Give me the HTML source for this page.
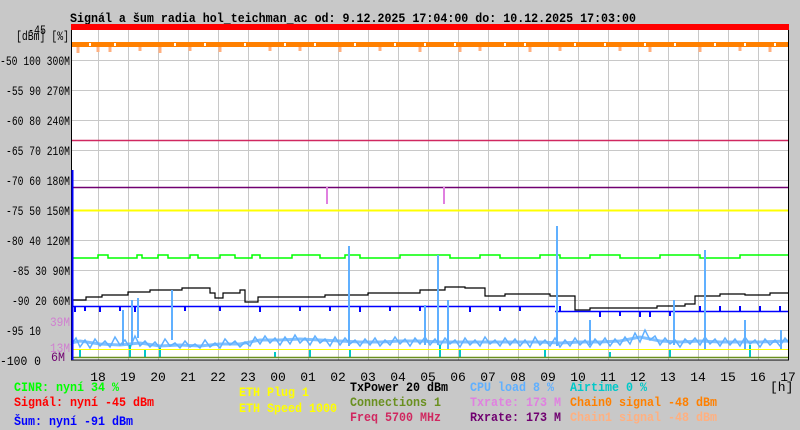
<!DOCTYPE html>
<html><head><meta charset="utf-8"><style>
html,body{margin:0;padding:0;background:#c8c8c8;width:800px;height:430px;overflow:hidden}
svg{display:block}
text{font-family:"Liberation Mono","DejaVu Sans Mono",monospace;font-size:13px}
.b{font-weight:bold}
</style></head><body>
<svg width="800" height="430" xmlns="http://www.w3.org/2000/svg">
<rect width="800" height="430" fill="#c8c8c8"/>
<text x="70" y="22" class="b" fill="#000" textLength="566" lengthAdjust="spacingAndGlyphs">Signál a šum radia hol_teichman_ac od: 9.12.2025 17:04:00 do: 10.12.2025 17:03:00</text>
<rect x="71" y="30" width="718" height="330" fill="#fff"/>
<g stroke="#c8c8c8" stroke-width="1">
<path d="M71 60.5H789M71 90.5H789M71 120.5H789M71 150.5H789M71 180.5H789M71 210.5H789M71 240.5H789M71 270.5H789M71 300.5H789M71 330.5H789"/>
<path d="M98.5 30V360M128.5 30V360M158.5 30V360M188.5 30V360M218.5 30V360M248.5 30V360M278.5 30V360M308.5 30V360M338.5 30V360M368.5 30V360M398.5 30V360M428.5 30V360M458.5 30V360M488.5 30V360M518.5 30V360M548.5 30V360M578.5 30V360M608.5 30V360M638.5 30V360M668.5 30V360M698.5 30V360M728.5 30V360M758.5 30V360"/>
</g>
<rect x="71" y="24" width="718" height="6" fill="#ff0000"/>
<rect x="71" y="42" width="718" height="5" fill="#ff8000"/>
<g stroke="#ffffff" stroke-width="2"><path d="M90 43v3M115 43v3M175 43v3M205 43v3M245 43v3M285 43v3M315 43v3M355 43v3M395 43v3M425 43v3M455 43v3M505 43v3M525 43v3M575 43v3M605 43v3M645 43v3M675 43v3M715 43v3M745 43v3M775 43v3"/></g>
<g stroke="#ffb080" stroke-width="3"><path d="M78 47v6M98 47v5M140 47v4M160 47v6M190 47v4M220 47v5M270 47v4M340 47v5M380 47v4M420 47v5M480 47v4M530 47v5M560 47v4M620 47v4M700 47v5M740 47v4M770 47v5M110 47v5M300 47v4M460 47v5M650 47v5"/></g>
<path d="M71 140.5H789" stroke="#d02860" stroke-width="1.5"/>
<path d="M71 187.5H789" stroke="#700070" stroke-width="1.5"/>
<path d="M327 187v17M444 187v17" stroke="#e080e0" stroke-width="2"/>
<path d="M71 210.5H789" stroke="#ffff00" stroke-width="2"/>
<path d="M71 258H98V255H108V258H137V255H142V258H158V255H168V258H190V255H198V258H220V255H235V258H252V255H260V258H292V255H320V258H345V255H360V258H400V255H450V258H480V255H500V258H540V255H560V258H590V255H620V258H660V255H700V258H740V255H789" fill="none" stroke="#00ff00" stroke-width="1.5"/>
<path d="M71 300H86V297H102V295H128V292H150V290H182V288H210V293H215V298H223V293H240V290H245V302H258V297H325V295H368V293H420V290H445V287H465V288H485V296H505V294H550V296H575V310H590V308H657V306H685V304H695V296H720V294H745V295H770V293H789" fill="none" stroke="#000" stroke-width="1.2"/>
<path d="M71 306.5H555M555 311.5H789" stroke="#0000ff" stroke-width="1.5"/>
<g stroke="#0000ff" stroke-width="2"><path d="M75 306v6M85 306v5M100 306v6M120 306v5M135 306v6M185 306v5M220 306v5M260 306v6M300 306v5M330 306v5M360 306v6M390 306v5M420 306v5M470 306v6M500 306v5M520 306v5M560 306v6M600 311v6M620 311v5M640 311v6M650 311v6M670 311v5M700 306v6M720 306v6M740 306v6M760 306v6M780 306v6"/></g>
<path d="M71 345L76 338 80 347 85 340 90 348 95 339 100 346 105 341 110 347 115 337 120 345 125 340 130 348 135 336 140 346 145 341 150 347 155 342 160 348 165 339 170 346 175 343 180 348 185 341 190 347 195 344 200 348 205 340 210 347 215 343 220 348 225 339 230 345 235 341 240 347 245 342 250 346 255 337 260 344 265 336 270 343 275 338 280 345 285 337 290 344 295 335 300 343 305 338 310 345 315 336 320 343 325 339 330 346 335 337 340 345 345 338 350 344 355 340 360 346 365 339 370 345 375 338 380 346 385 340 390 345 395 337 400 344 405 339 410 346 415 338 420 344 425 337 430 345 435 339 440 346 445 338 450 344 455 340 460 347 465 338 470 345 475 340 480 346 485 337 490 344 495 340 500 346 505 338 510 345 515 339 520 346 525 340 530 347 535 337 540 345 545 340 550 346 555 338 560 347 565 340 570 346 575 338 580 345 585 340 590 347 595 339 600 345 605 338 610 346 615 339 620 345 625 337 630 344 635 333 640 342 645 330 650 340 655 336 660 345 665 338 670 344 675 340 680 347 685 339 690 344 695 338 700 345 705 337 710 344 715 339 720 346 725 338 730 345 735 339 740 346 745 337 750 344 755 340 760 347 765 339 770 345 775 340 780 346 785 338 789 343" fill="none" stroke="#60b0ff" stroke-width="1.5"/>
<path d="M71 343L80 341 100 344 120 345 140 343 160 346 180 345 200 346 220 344 240 344 260 340 280 340 300 339 320 340 340 341 360 342 380 342 400 341 420 341 440 342 460 342 480 342 500 342 520 342 540 342 560 343 580 342 600 342 620 341 640 337 660 341 680 342 700 341 720 342 740 342 760 342 789 341" fill="none" stroke="#60b0ff" stroke-width="3" opacity="0.8"/>
<g stroke="#60b0ff" stroke-width="2"><path d="M123 310v35M132 300v45M138 298v40M172 290v50M349 246v100M425 305v40M438 255v90M448 300v50M557 226v120M590 320v25M674 300v45M705 250v100M745 320v30M781 330v20"/></g>
<g stroke="#00c8c8" stroke-width="2"><path d="M80 350v8M130 345v13M145 350v8M160 348v10M275 352v6M310 350v8M350 350v8M440 345v13M460 350v8M545 350v8M610 352v6M670 350v8M750 345v13"/></g>
<path d="M71 349.5H789" stroke="#ffff00" stroke-width="1"/>
<path d="M71 357.5H789" stroke="#6a9020" stroke-width="1.5"/>
<path d="M71.5 30V360M71 360H789M788.5 30V360" stroke="#000" stroke-width="1"/>
<path d="M72.5 170V360" stroke="#0000ff" stroke-width="2"/>
<g fill="#000">
<text x="0" y="65" textLength="70" lengthAdjust="spacingAndGlyphs">-50 100 300M</text>
<text x="6" y="95" textLength="64" lengthAdjust="spacingAndGlyphs">-55 90 270M</text>
<text x="6" y="125" textLength="64" lengthAdjust="spacingAndGlyphs">-60 80 240M</text>
<text x="6" y="155" textLength="64" lengthAdjust="spacingAndGlyphs">-65 70 210M</text>
<text x="6" y="185" textLength="64" lengthAdjust="spacingAndGlyphs">-70 60 180M</text>
<text x="6" y="215" textLength="64" lengthAdjust="spacingAndGlyphs">-75 50 150M</text>
<text x="6" y="245" textLength="64" lengthAdjust="spacingAndGlyphs">-80 40 120M</text>
<text x="12" y="275" textLength="58" lengthAdjust="spacingAndGlyphs">-85 30 90M</text>
<text x="12" y="305" textLength="58" lengthAdjust="spacingAndGlyphs">-90 20 60M</text>
<text x="6" y="335" textLength="35" lengthAdjust="spacingAndGlyphs">-95 10</text>
<text x="0" y="365" textLength="41" lengthAdjust="spacingAndGlyphs">-100 0</text>
<text x="28" y="34" textLength="18" lengthAdjust="spacingAndGlyphs">-45</text>
<text x="16" y="40" textLength="53" lengthAdjust="spacingAndGlyphs">[dBm] [%]</text>
</g>
<text x="50" y="326" fill="#d080d0" textLength="20" lengthAdjust="spacingAndGlyphs">39M</text>
<text x="50" y="352" fill="#d080d0" textLength="20" lengthAdjust="spacingAndGlyphs">13M</text>
<text x="51" y="361" fill="#700070" textLength="14" lengthAdjust="spacingAndGlyphs">6M</text>
<g fill="#000" text-anchor="middle">
<text x="98" y="381">18</text><text x="128" y="381">19</text><text x="158" y="381">20</text><text x="188" y="381">21</text><text x="218" y="381">22</text><text x="248" y="381">23</text><text x="278" y="381">00</text><text x="308" y="381">01</text><text x="338" y="381">02</text><text x="368" y="381">03</text><text x="398" y="381">04</text><text x="428" y="381">05</text><text x="458" y="381">06</text><text x="488" y="381">07</text><text x="518" y="381">08</text><text x="548" y="381">09</text><text x="578" y="381">10</text><text x="608" y="381">11</text><text x="638" y="381">12</text><text x="668" y="381">13</text><text x="698" y="381">14</text><text x="728" y="381">15</text><text x="758" y="381">16</text><text x="788" y="381">17</text>
</g>
<g class="b">
<text x="14" y="391" fill="#00ff00" textLength="105" lengthAdjust="spacingAndGlyphs">CINR: nyní 34 %</text>
<text x="14" y="406" fill="#ff0000" textLength="140" lengthAdjust="spacingAndGlyphs">Signál: nyní -45 dBm</text>
<text x="14" y="425" fill="#0000ff" textLength="119" lengthAdjust="spacingAndGlyphs">Šum: nyní -91 dBm</text>
<text x="239" y="396" fill="#ffff00" textLength="70" lengthAdjust="spacingAndGlyphs">ETH Plug 1</text>
<text x="239" y="412" fill="#ffff00" textLength="98" lengthAdjust="spacingAndGlyphs">ETH Speed 1000</text>
<text x="350" y="391" fill="#000" textLength="98" lengthAdjust="spacingAndGlyphs">TxPower 20 dBm</text>
<text x="350" y="406" fill="#6a9020" textLength="91" lengthAdjust="spacingAndGlyphs">Connections 1</text>
<text x="350" y="421" fill="#d02860" textLength="91" lengthAdjust="spacingAndGlyphs">Freq 5700 MHz</text>
<text x="470" y="391" fill="#60b0ff" textLength="84" lengthAdjust="spacingAndGlyphs">CPU load 8 %</text>
<text x="470" y="406" fill="#e080e0" textLength="91" lengthAdjust="spacingAndGlyphs">Txrate: 173 M</text>
<text x="470" y="421" fill="#700070" textLength="91" lengthAdjust="spacingAndGlyphs">Rxrate: 173 M</text>
<text x="570" y="391" fill="#00c8c8" textLength="77" lengthAdjust="spacingAndGlyphs">Airtime 0 %</text>
<text x="570" y="406" fill="#ff8000" textLength="147" lengthAdjust="spacingAndGlyphs">Chain0 signal -48 dBm</text>
<text x="570" y="421" fill="#ffb080" textLength="147" lengthAdjust="spacingAndGlyphs">Chain1 signal -48 dBm</text>
</g>
<text x="770" y="391" fill="#000">[h]</text>
</svg>
</body></html>
